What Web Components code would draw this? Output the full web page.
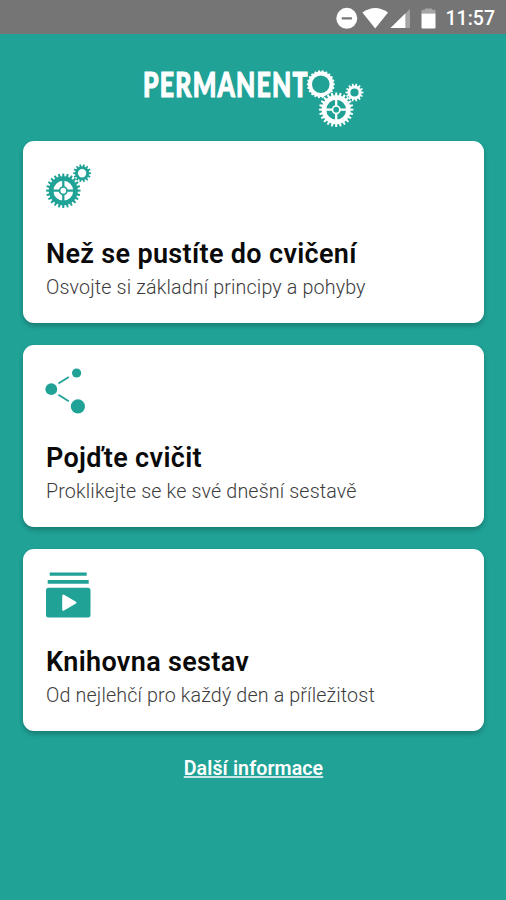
<!DOCTYPE html>
<html lang="cs">
<head>
<meta charset="utf-8">
<title>Permanento</title>
<style>
  html, body { margin: 0; height: 100%; background: #20a296; }
  body { font-family: Roboto, "Liberation Sans", sans-serif; }
</style>
</head>
<body>
<permanento-app></permanento-app>

<script>
// Outline of a toothed ring, drawn as one closed path around cx, cy.
const gearPath = (cx, cy, outer, root, teeth) => {
  const step = (Math.PI * 2) / teeth;
  const points = [];
  for (let i = 0; i < teeth; i++) {
    [[-0.3, root], [-0.2, outer], [0.2, outer], [0.3, root]].forEach(([offset, r]) => {
      const a = (i + offset) * step;
      points.push(`${(cx + r * Math.cos(a)).toFixed(2)} ${(cy + r * Math.sin(a)).toFixed(2)}`);
    });
  }
  return `M${points.join("L")}Z`;
};

const holePath = (cx, cy, r) =>
  `M${cx - r} ${cy}a${r} ${r} 0 1 0 ${r * 2} 0a${r} ${r} 0 1 0 ${-r * 2} 0Z`;

const gear = (cx, cy, outer, root, teeth, hole) =>
  `<path fill="currentColor" fill-rule="evenodd" d="${gearPath(cx, cy, outer, root, teeth)}${holePath(cx, cy, hole)}"/>`;

const spokedGear = (cx, cy) => `
  ${gear(cx, cy, 17.3, 14.5, 24, 9.9)}
  <path stroke="currentColor" stroke-width="2.3" d="M${cx - 11} ${cy}h7.2m7.6 0h7.2M${cx} ${cy - 11}v7.2m0 7.6v7.2"/>
  <circle cx="${cx}" cy="${cy}" r="3.7" fill="none" stroke="currentColor" stroke-width="1.7"/>`;

const icons = {
  gears: `${spokedGear(17.3, 25.7)}${gear(36.1, 8.2, 9, 7, 14, 4.2)}`,
  share: `
    <path stroke="currentColor" stroke-width="1.8" d="M12.4 14.6L22.8 8.1M12.4 25.7L22.8 32.2"/>
    <circle cx="5.3" cy="20.2" r="5.9" fill="currentColor"/>
    <circle cx="30.6" cy="4" r="4.6" fill="currentColor"/>
    <circle cx="31.9" cy="37.4" r="7.1" fill="currentColor"/>`,
  library: `
    <g transform="translate(0 -3.6)">
      <path fill="currentColor" d="M3.7 3.2h37v3.2h-37zM1.7 10.6h41v3.8h-41z"/>
      <path fill="currentColor" fill-rule="evenodd" d="M2.500 18.300h39.500a2.500 2.500 0 0 1 2.500 2.500v24.700a2.500 2.500 0 0 1-2.500 2.500h-39.500A2.500 2.500 0 0 1 0 45.500V20.800a2.500 2.500 0 0 1 2.500-2.500zM16.200 26.600v13.600q.2 1.800 1.800 1l12-7q1-1 0-1.900l-12-7q-1.600-.8-1.800 1.300z"/>
    </g>`,
};

class StatusBar extends HTMLElement {
  constructor() {
    super();
    this.shadowDOM = this.attachShadow({ mode: "open" });
    this.shadowDOM.innerHTML = `
    <style>
    :host {
      display: flex;
      justify-content: flex-end;
      align-items: center;
      box-sizing: border-box;
      height: 34px;
      padding: 2px 11px 0 0;
      background: #757575;
      color: #fff;
      font-size: 19.5px;
      font-weight: 500;
      gap: 9px;
    }
    svg {
      display: block;
      margin-top: -1px;
    }
    </style>
    <svg width="101" height="24" viewBox="336 5 101 24" fill="#fff">
      <path fill-rule="evenodd" d="M336.3 17.3a10.5 10.5 0 1 0 21 0a10.5 10.5 0 1 0-21 0zM341.7 16.2h10.2v2.3h-10.2z"/>
      <path d="M362.4 11.6q12.8-9.2 25.6 0l-12.8 15.8z"/>
      <path fill-opacity=".35" d="M410 8v19h-19.5z"/>
      <path d="M405.3 12.6V27h-14.8z"/>
      <path fill-opacity=".35" d="M421.5 12.5V10q0-1.2 1.2-1.2h2.3v-1.4h7v1.4h2.3q1.2 0 1.2 1.2v2.5z"/>
      <path d="M421.5 12.5h14v13.8q0 1.2-1.2 1.2h-11.6q-1.2 0-1.2-1.2z"/>
    </svg>
    <span><slot></slot></span>`;
  }
}

class AppLogo extends HTMLElement {
  constructor() {
    super();
    this.shadowDOM = this.attachShadow({ mode: "open" });
    this.shadowDOM.innerHTML = `
    <style>
    :host {
      display: block;
      color: #fff;
    }
    svg {
      display: block;
      margin: 0 auto;
    }
    text {
      font: 900 34px Lato, "Open Sans", sans-serif;
      letter-spacing: 1.6px;
    }
    </style>
    <svg width="230" height="86" viewBox="138.500 50 230 86">
      <text x="142.6" y="96.5" textLength="165.5" lengthAdjust="spacingAndGlyphs" fill="currentColor" stroke="currentColor" stroke-width="1.1">PERMANENT</text>
      ${gear(320.3, 84.3, 14, 12.8, 22, 8.8)}
      <circle cx="335.7" cy="109.7" r="17.6" fill="#20a296"/>
      ${spokedGear(335.7, 109.7)}
      ${gear(354, 92.5, 9, 7, 14, 4.1)}
    </svg>`;
  }
}

class MenuCard extends HTMLElement {
  constructor() {
    super();
    this.shadowDOM = this.attachShadow({ mode: "open" });
  }

  connectedCallback() {
    this.render();
  }

  render() {
    this.shadowDOM.innerHTML = `
    <style>
    :host {
      display: flex;
      flex-direction: column;
      box-sizing: border-box;
      height: 182px;
      padding: 24px 23px 0;
      border-radius: 11px;
      background: #fff;
      box-shadow: 0 3px 5px rgba(0,0,0,0.24);
    }
    svg {
      display: block;
      color: #20a296;
      overflow: visible;
    }
    h2 {
      margin: 25px 0 0;
      font-size: 27px;
      line-height: 32px;
      font-weight: 600;
      letter-spacing: 0.33px;
      color: #0a0a0a;
      white-space: nowrap;
    }
    p {
      margin: 6px 0 0;
      font-size: 19.7px;
      line-height: 24px;
      font-weight: 300;
      letter-spacing: 0.14px;
      color: #3c3c3c;
      white-space: nowrap;
    }
    </style>
    <svg width="48" height="48" viewBox="0 0 48 48" fill="none">${icons[this.getAttribute("icon")]}</svg>
    <h2><slot name="title"></slot></h2>
    <p><slot></slot></p>`;
  }
}

class MoreLink extends HTMLElement {
  constructor() {
    super();
    this.shadowDOM = this.attachShadow({ mode: "open" });
    this.shadowDOM.innerHTML = `
    <style>
    :host {
      display: block;
      text-align: center;
    }
    a {
      color: #fff;
      font-size: 19.6px;
      line-height: 24px;
      font-weight: 600;
      letter-spacing: 0.1px;
      text-decoration: underline;
      text-decoration-thickness: 2px;
      text-decoration-skip-ink: none;
      text-decoration-color: rgba(255,255,255,0.75);
      text-underline-offset: 1px;
    }
    </style>
    <a href="#"><slot></slot></a>`;
  }
}

class PermanentoApp extends HTMLElement {
  constructor() {
    super();
    this.shadowDOM = this.attachShadow({ mode: "open" });
    this.shadowDOM.innerHTML = `
    <style>
    :host {
      display: block;
      min-height: 100%;
    }
    main {
      padding: 16px 22px 0 23px;
    }
    nav {
      display: grid;
      gap: 22px;
      margin-top: 5px;
    }
    more-link {
      margin-top: 26px;
    }
    </style>
    <status-bar>11:57</status-bar>
    <main>
      <app-logo></app-logo>
      <nav>
        <menu-card icon="gears">
          <span slot="title">Než se pustíte do cvičení</span>
          Osvojte si základní principy a pohyby
        </menu-card>
        <menu-card icon="share">
          <span slot="title">Pojďte cvičit</span>
          Proklikejte se ke své dnešní sestavě
        </menu-card>
        <menu-card icon="library">
          <span slot="title">Knihovna sestav</span>
          Od nejlehčí pro každý den a příležitost
        </menu-card>
      </nav>
      <more-link>Další informace</more-link>
    </main>`;
  }
}

customElements.define("status-bar", StatusBar);
customElements.define("app-logo", AppLogo);
customElements.define("menu-card", MenuCard);
customElements.define("more-link", MoreLink);
customElements.define("permanento-app", PermanentoApp);
</script>
</body>
</html>
